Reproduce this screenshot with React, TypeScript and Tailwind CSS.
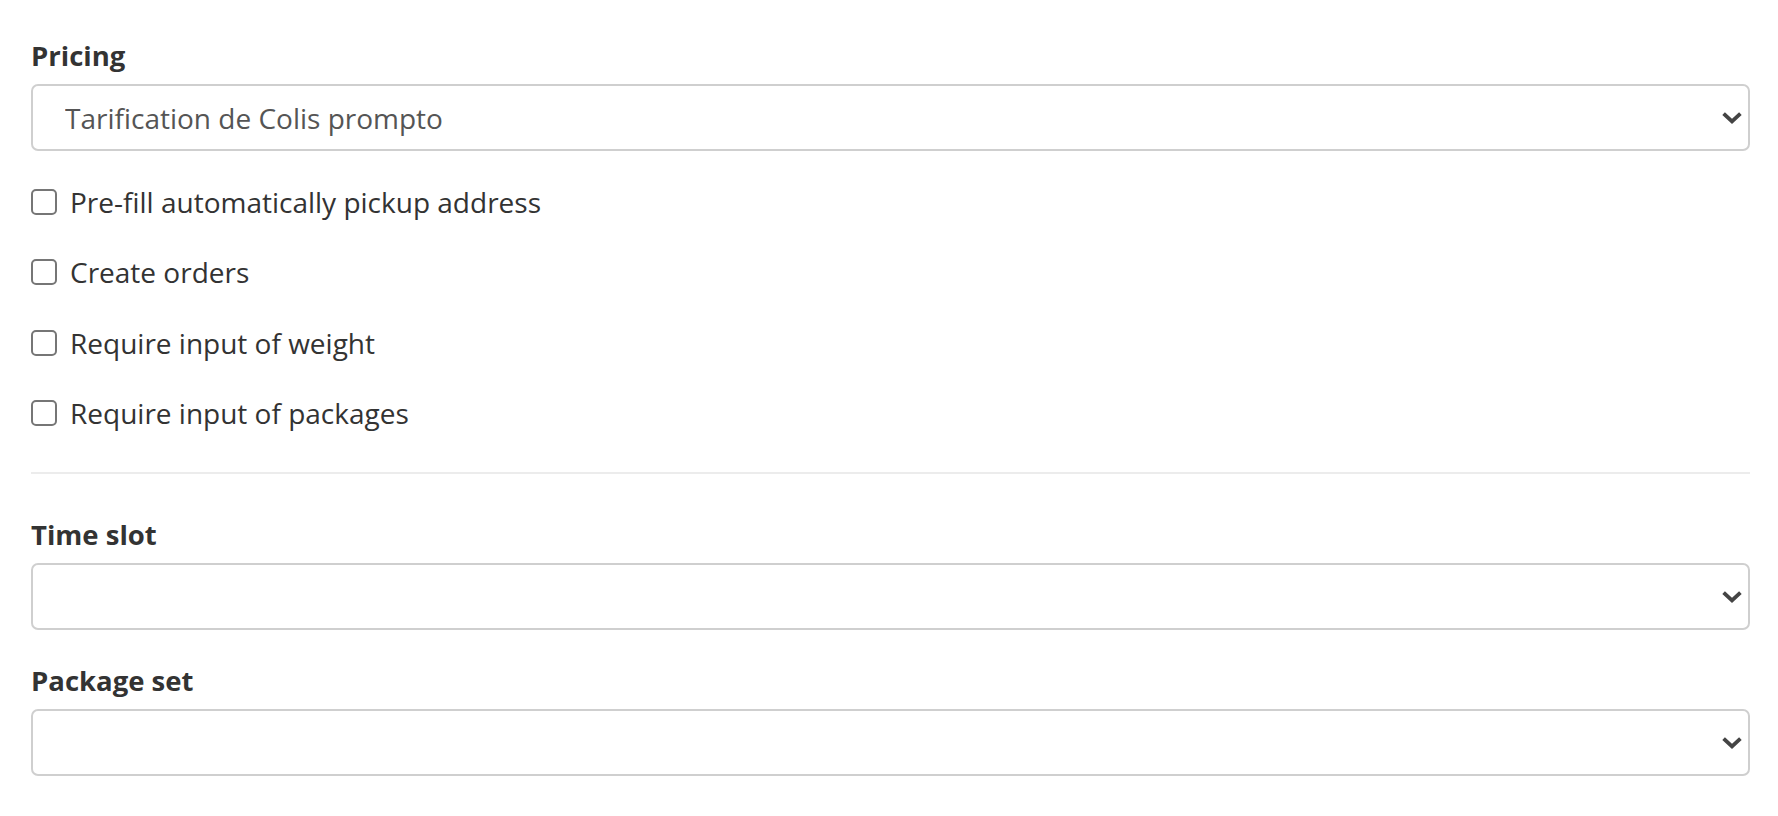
import React from 'react';

const Chevron: React.FC = () => (
    <svg className="pointer-events-none absolute right-[8px] top-1/2 -translate-y-1/2" width="20" height="14" viewBox="0 0 20 14" fill="none">
        <path d="M3 4 L10 10.5 L17 4" stroke="#444" strokeWidth="3.8" strokeLinecap="square" />
    </svg>
);

const SelectField: React.FC<{ value?: string }> = ({ value }) => (
    <div className="relative">
        <select
            defaultValue={value ?? ''}
            className="w-full h-[67px] appearance-none rounded-[7px] border-2 border-[#cfcfcf] bg-white pl-[32px] pr-12 text-[28px] text-[#555] outline-none"
        >
            <option value={value ?? ''}>{value ?? ''}</option>
        </select>
        <Chevron />
    </div>
);

const CheckRow: React.FC<{ label: string }> = ({ label }) => (
    <label className="flex items-center gap-[13px] h-[26px]">
        <input type="checkbox" className="appearance-none w-[26px] h-[26px] rounded-[5px] border-2 border-[#767676] bg-white shrink-0" />
        <span className="text-[28px] leading-[36px] text-[#333]">{label}</span>
    </label>
);

const App: React.FC = () => {
    return (
        <div className="min-h-screen bg-white pl-[31px] pr-[28px] pt-[38px]" style={{ fontFamily: '"Open Sans", sans-serif' }}>
            <p className="text-[27.5px] font-bold text-[#333] leading-[36px] mb-[10px]">Pricing</p>
            <SelectField value="Tarification de Colis prompto" />

            <div className="flex flex-col gap-[44.3px] mt-[38px]">
                <CheckRow label="Pre-fill automatically pickup address" />
                <CheckRow label="Create orders" />
                <CheckRow label="Require input of weight" />
                <CheckRow label="Require input of packages" />
            </div>

            <hr className="border-t-2 border-[#ececec] mt-[46.5px]" />

            <p className="text-[27.5px] font-bold text-[#333] leading-[36px] mt-[43px] mb-[10px]">Time slot</p>
            <SelectField />

            <p className="text-[27.5px] font-bold text-[#333] leading-[36px] mt-[33px] mb-[10px]">Package set</p>
            <SelectField />
        </div>
    );
};

export default App;
